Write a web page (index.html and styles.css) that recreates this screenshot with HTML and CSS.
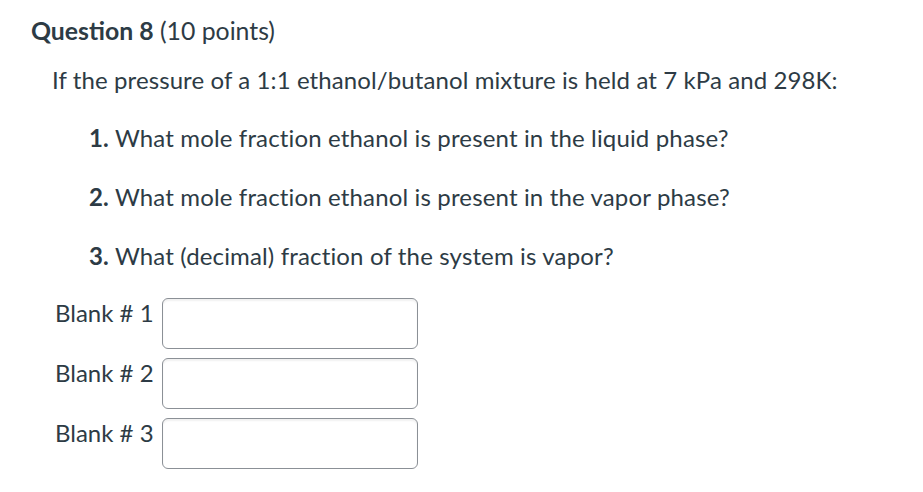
FILE: index.html
```html
<!DOCTYPE html>
<html>
<head>
<meta charset="utf-8">
<link rel="stylesheet" href="styles.css">
</head>
<body>
<div class="question">
  <h2 class="title"><span class="qname">Question 8</span> (10 points)</h2>
  <p class="prompt">If the pressure of a 1:1 ethanol/butanol mixture is held at 7 kPa and 298K:</p>
  <ol class="items">
    <li><b>1.</b> What mole fraction ethanol is present in the liquid phase?</li>
    <li><b>2.</b> What mole fraction ethanol is present in the vapor phase?</li>
    <li><b>3.</b> What (decimal) fraction of the system is vapor?</li>
  </ol>
  <div class="blanks">
    <div class="blank"><span class="label">Blank # 1</span><input class="box" type="text"></div>
    <div class="blank"><span class="label">Blank # 2</span><input class="box" type="text"></div>
    <div class="blank"><span class="label">Blank # 3</span><input class="box" type="text"></div>
  </div>
</div>
</body>
</html>
```

FILE: styles.css
```css
html, body {
  margin: 0;
  padding: 0;
  background: #ffffff;
}
body {
  font-family: Lato, "Liberation Sans", sans-serif;
  color: #2d3b45;
}
.question {
  padding: 16px 0 0 31px;
}
.title {
  margin: 0;
  font-size: 24.8px;
  font-weight: 400;
  line-height: 30px;
}
.qname {
  font-weight: 700;
}
.prompt {
  margin: 19px 0 0 21px;
  font-size: 24px;
  line-height: 30px;
  letter-spacing: 0.1px;
}
.items {
  list-style: none;
  display: flex;
  flex-direction: column;
  gap: 29px;
  margin: 28px 0 0 58px;
  padding: 0;
  font-size: 24px;
  line-height: 30px;
  letter-spacing: 0.15px;
}
.items b {
  font-weight: 700;
}
.blanks {
  display: flex;
  flex-direction: column;
  gap: 9px;
  margin: 27px 0 0 24px;
}
.blank {
  display: flex;
  align-items: flex-start;
  gap: 8px;
}
.label {
  font-size: 24px;
  line-height: 30px;
}
.box {
  box-sizing: border-box;
  width: 256px;
  height: 51px;
  margin: 0;
  border: 1px solid #8b9096;
  border-radius: 6px;
  box-shadow: inset 0 2px 2px rgba(0,0,0,0.06);
  background: #fff;
}
```
